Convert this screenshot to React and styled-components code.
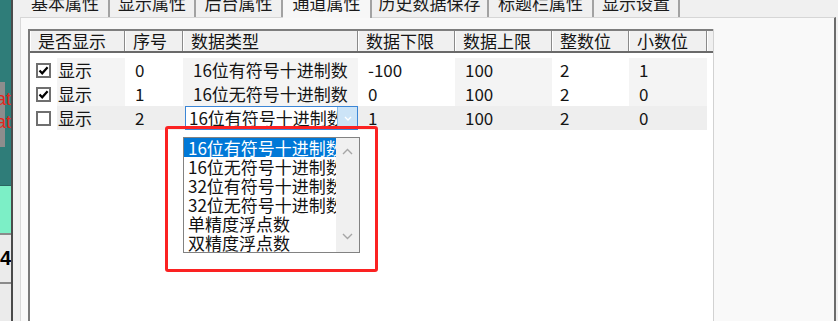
import React from "react";
import styled, { createGlobalStyle } from "styled-components";

const GlobalStyle = createGlobalStyle`
  html, body {
    margin: 0;
    padding: 0;
    background: #f0f0f0;
    overflow: hidden;
  }
`;

const FONT = `"Noto Sans CJK SC", "Liberation Sans", sans-serif`;

const Screen = styled.div`
  position: relative;
  width: 838px;
  height: 321px;
  overflow: hidden;
  display: flex;
  font-family: ${FONT};
  font-size: 17px;
  color: #141414;
`;

/* sliver of the window behind, on the left */
const BackWindow = styled.div`
  width: 11px;
  flex: none;
  display: flex;
  flex-direction: column;
  overflow: hidden;
`;

const TealPane = styled.div`
  height: 185px;
  flex: none;
  background: #2f7d79;
  padding-top: 82px;
  box-sizing: border-box;
`;

const Chip = styled.div`
  height: 65px;
  padding-top: 6px;
  box-sizing: border-box;
  background: linear-gradient(to right, #8d8d8d 5px, transparent 5px);
`;

const RedLine = styled.div`
  display: flex;
  justify-content: flex-end;
  height: 23px;
  line-height: 23px;
  font-family: "Liberation Sans", sans-serif;
  font-size: 18px;
  color: #e3261c;
  white-space: nowrap;
`;

const MintBand = styled.div`
  height: 48px;
  flex: none;
  background: #7cefc6;
  border-top: 1px solid #2a6662;
  box-sizing: border-box;
`;

const GrayCell = styled.div`
  height: ${({ $h }) => $h}px;
  flex: none;
  background: #ebebeb;
  border-top: 2px solid #8a8a8a;
  box-sizing: border-box;
  display: flex;
  justify-content: flex-end;
  align-items: center;
  font-family: "Liberation Sans", sans-serif;
  font-weight: bold;
  font-size: 20px;
  color: #000;
`;

const Divider = styled.div`
  width: 2px;
  flex: none;
  background: #4b4b4b;
`;

const Dialog = styled.div`
  flex: 1;
  display: flex;
  flex-direction: column;
  background: #f0f0f0;
  min-width: 0;
`;

const TabStrip = styled.div`
  height: 17px;
  flex: none;
  display: flex;
  padding-left: 9px;
  position: relative;
  z-index: 1;
`;

const Tab = styled.div`
  width: ${({ $w }) => $w}px;
  height: ${({ $active }) => ($active ? 18 : 17)}px;
  flex: none;
  box-sizing: border-box;
  border-right: 2px solid #a2a2a2;
  background: ${({ $active }) => ($active ? "#f7f7f7" : "#f0f0f0")};
  display: flex;
  justify-content: center;
  overflow: hidden;
`;

const TabLabel = styled.span`
  margin-top: -6px;
  line-height: 17px;
  white-space: nowrap;
  color: #1a1a1a;
`;

const TabPage = styled.div`
  flex: 1;
  margin: 0 2px 0 7px;
  border-top: 1px solid #d6d6d6;
  border-left: 1px solid #d8d8d8;
  border-right: 2px solid #6c6c6c;
  background: #f9f9f9;
  padding: 11px 0 0 7px;
  display: flex;
  flex-direction: column;
`;

const Grid = styled.div`
  width: 683px;
  flex: 1;
  border-left: 2px solid #7a7a7a;
  border-right: 1px solid #d2d2d2;
  background: #fff;
`;

const Header = styled.div`
  display: flex;
  height: 20px;
  background: #f0f0f0;
  border-top: 2px solid #7e7e7e;
  border-bottom: 2px solid #6a6a6a;
  overflow: hidden;
`;

const HeaderCell = styled.div`
  width: ${({ $w }) => $w}px;
  flex: none;
  box-sizing: border-box;
  padding-left: 8px;
  line-height: 20px;
  white-space: nowrap;
  overflow: hidden;
  border-right: 1px solid #8a8a8a;
  box-shadow: inset 1px 0 0 #ffffff;
`;

const Body = styled.div`
  padding-top: 5px;
`;

const Row = styled.div`
  display: flex;
  height: 24px;
`;

const Cell = styled.div`
  width: ${({ $w }) => $w}px;
  flex: none;
  box-sizing: border-box;
  padding-left: ${({ $pad }) => ($pad ?? 10)}px;
  line-height: 24px;
  white-space: nowrap;
  background: ${({ $active, $shade }) =>
    $active ? "#eeeeee" : $shade ? "#f4f4f4" : "#ffffff"};
`;

const CheckArea = styled.div`
  width: 27px;
  flex: none;
  background: #fff;
  display: flex;
  align-items: center;
  padding-left: 6px;
  box-sizing: border-box;
`;

const Box = styled.div`
  width: 15px;
  height: 15px;
  box-sizing: border-box;
  border: 2px solid #6f6f6f;
  background: #fff;
  display: flex;
  align-items: center;
  justify-content: center;
`;

const Combo = styled.div`
  position: relative;
  margin-left: 2px;
  width: 173px;
  height: 24px;
  box-sizing: border-box;
  border: 1px solid #3b86d6;
  background: #fff;
  display: flex;
`;

const ComboText = styled.div`
  flex: 1;
  overflow: hidden;
  white-space: nowrap;
  padding-left: 3px;
  line-height: 22px;
`;

const ComboButton = styled.div`
  width: 19px;
  flex: none;
  background: #cce4f7;
  border-left: 1px solid #8cbcea;
  display: flex;
  align-items: center;
  justify-content: center;
`;

const DropList = styled.div`
  position: absolute;
  left: -3px;
  top: 30px;
  width: 177px;
  height: 116px;
  box-sizing: border-box;
  border: 1px solid #828282;
  background: #fff;
  display: flex;
  z-index: 2;
`;

const Items = styled.div`
  flex: 1;
  min-width: 0;
  overflow: hidden;
`;

const Item = styled.div`
  height: 19px;
  line-height: 19px;
  padding-left: 4px;
  white-space: nowrap;
  overflow: hidden;
  background: ${({ $sel }) => ($sel ? "#0078d7" : "transparent")};
  color: ${({ $sel }) => ($sel ? "#fff" : "#111")};
`;

const ScrollBar = styled.div`
  width: 23px;
  flex: none;
  background: #f0f0f0;
  display: flex;
  flex-direction: column;
  justify-content: space-between;
  align-items: center;
  padding: 10px 0 12px;
  box-sizing: border-box;
`;

const Marker = styled.div`
  position: absolute;
  left: 165px;
  top: 126px;
  width: 213px;
  height: 146px;
  box-sizing: border-box;
  border: 3px solid #fb2222;
  border-radius: 3px;
  z-index: 3;
  pointer-events: none;
`;

const tabs = [
  ["基本属性", 88],
  ["显示属性", 86],
  ["后台属性", 87],
  ["通道属性", 89, true],
  ["历史数据保存", 117],
  ["标题栏属性", 105],
  ["显示设置", 86],
];

const cols = [95, 58, 175, 97, 97, 77, 78, 6];
const heads = ["是否显示", "序号", "数据类型", "数据下限", "数据上限", "整数位", "小数位", ""];

const rows = [
  { on: true, idx: "0", type: "16位有符号十进制数", lo: "-100", hi: "100", int: "2", dec: "1" },
  { on: true, idx: "1", type: "16位无符号十进制数", lo: "0", hi: "100", int: "2", dec: "0" },
  { on: false, idx: "2", type: "16位有符号十进制数", lo: "1", hi: "100", int: "2", dec: "0", editing: true },
];

const options = [
  "16位有符号十进制数",
  "16位无符号十进制数",
  "32位有符号十进制数",
  "32位无符号十进制数",
  "单精度浮点数",
  "双精度浮点数",
];

const Check = () => (
  <svg width="11" height="11" viewBox="0 0 11 11">
    <path d="M1.5 5.5 L4.2 8.3 L9.6 2.2" fill="none" stroke="#000" strokeWidth="2.2" />
  </svg>
);

const Chevron = ({ up, color = "#a6a6a6" }) => (
  <svg width="11" height="7" viewBox="0 0 11 7">
    <path
      d={up ? "M1 6 L5.5 1.5 L10 6" : "M1 1 L5.5 5.5 L10 1"}
      fill="none"
      stroke={color}
      strokeWidth="1.4"
    />
  </svg>
);

const DataRow = ({ r }) => (
  <Row>
    <CheckArea>
      <Box>{r.on && <Check />}</Box>
    </CheckArea>
    <Cell $w={68} $pad={1} $shade $active={r.editing}>显示</Cell>
    <Cell $w={cols[1]} $active={r.editing}>{r.idx}</Cell>
    {r.editing ? (
      <Cell $w={cols[2]} $pad={0} $active>
        <Combo>
          <ComboText>{r.type}</ComboText>
          <ComboButton>
            <svg width="8" height="5" viewBox="0 0 8 5">
              <path d="M1 1 L4 4 L7 1" fill="none" stroke="#ffffff" strokeWidth="1.3" />
            </svg>
          </ComboButton>
          <DropList>
            <Items>
              {options.map((o, i) => (
                <Item key={o} $sel={i === 0}>{o}</Item>
              ))}
            </Items>
            <ScrollBar>
              <Chevron up />
              <Chevron />
            </ScrollBar>
          </DropList>
        </Combo>
      </Cell>
    ) : (
      <Cell $w={cols[2]} $shade>{r.type}</Cell>
    )}
    <Cell $w={cols[3]} $active={r.editing}>{r.lo}</Cell>
    <Cell $w={cols[4]} $shade $active={r.editing}>{r.hi}</Cell>
    <Cell $w={cols[5]} $pad={8} $active={r.editing}>{r.int}</Cell>
    <Cell $w={cols[6]} $shade $active={r.editing}>{r.dec}</Cell>
  </Row>
);

export default function App() {
  return (
    <>
      <GlobalStyle />
      <Screen>
        <BackWindow>
          <TealPane>
            <Chip>
              <RedLine>at</RedLine>
              <RedLine>at</RedLine>
            </Chip>
          </TealPane>
          <MintBand />
          <GrayCell $h={49}>4</GrayCell>
          <GrayCell $h={60} />
        </BackWindow>
        <Divider />
        <Dialog>
          <TabStrip>
            {tabs.map(([t, w, active]) => (
              <Tab key={t} $w={w} $active={active}>
                <TabLabel>{t}</TabLabel>
              </Tab>
            ))}
          </TabStrip>
          <TabPage>
            <Grid>
              <Header>
                {heads.map((h, i) => (
                  <HeaderCell key={i} $w={cols[i]}>{h}</HeaderCell>
                ))}
              </Header>
              <Body>
                {rows.map((r) => (
                  <DataRow key={r.idx} r={r} />
                ))}
              </Body>
            </Grid>
          </TabPage>
        </Dialog>
        <Marker />
      </Screen>
    </>
  );
}
